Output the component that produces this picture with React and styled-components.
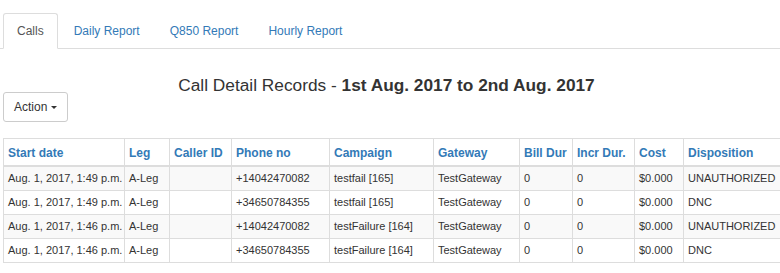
import React from "react";
import styled, { createGlobalStyle } from "styled-components";

const GlobalStyle = createGlobalStyle`
  body {
    margin: 0;
    background: #fff;
    font-family: "Liberation Sans", Arial, sans-serif;
    font-size: 12px;
    line-height: 17px;
    color: #333;
  }
`;

const tabs = ["Calls", "Daily Report", "Q850 Report", "Hourly Report"];

const columns = [
  { title: "Start date", width: 121 },
  { title: "Leg", width: 45 },
  { title: "Caller ID", width: 62 },
  { title: "Phone no", width: 98 },
  { title: "Campaign", width: 104 },
  { title: "Gateway", width: 86 },
  { title: "Bill Dur", width: 53 },
  { title: "Incr Dur.", width: 62 },
  { title: "Cost", width: 49 },
  { title: "Disposition", width: 97 },
];

const rows = [
  ["Aug. 1, 2017, 1:49 p.m.", "A-Leg", "", "+14042470082", "testfail [165]", "TestGateway", "0", "0", "$0.000", "UNAUTHORIZED"],
  ["Aug. 1, 2017, 1:49 p.m.", "A-Leg", "", "+34650784355", "testfail [165]", "TestGateway", "0", "0", "$0.000", "DNC"],
  ["Aug. 1, 2017, 1:46 p.m.", "A-Leg", "", "+14042470082", "testFailure [164]", "TestGateway", "0", "0", "$0.000", "UNAUTHORIZED"],
  ["Aug. 1, 2017, 1:46 p.m.", "A-Leg", "", "+34650784355", "testFailure [164]", "TestGateway", "0", "0", "$0.000", "DNC"],
];

function App() {
  return (
    <Page>
      <GlobalStyle />
      <TabBar>
        {tabs.map((t, i) => (
          <Tab key={t} $active={i === 0}>
            {t}
          </Tab>
        ))}
      </TabBar>
      <Title>
        Call Detail Records - <b>1st Aug. 2017 to 2nd Aug. 2017</b>
      </Title>
      <ActionButton>
        Action <Caret />
      </ActionButton>
      <Table>
        <colgroup>
          {columns.map((c) => (
            <col key={c.title} style={{ width: c.width }} />
          ))}
        </colgroup>
        <thead>
          <tr>
            {columns.map((c) => (
              <Th key={c.title}>
                <HeadLink>{c.title}</HeadLink>
              </Th>
            ))}
          </tr>
        </thead>
        <tbody>
          {rows.map((r, i) => (
            <Row key={i} $striped={i % 2 === 0}>
              {r.map((cell, j) => (
                <Td key={j}>{cell}</Td>
              ))}
            </Row>
          ))}
        </tbody>
      </Table>
    </Page>
  );
}

export default App;

const Page = styled.div`
  width: 780px;
  padding-top: 13px;
`;

const TabBar = styled.div`
  display: flex;
  padding-left: 3px;
  border-bottom: 1px solid #ddd;
`;

const Tab = styled.a`
  display: block;
  margin-right: 2px;
  margin-bottom: -1px;
  padding: 9px 13px 8px;
  line-height: 17px;
  border: 1px solid transparent;
  border-radius: 3px 3px 0 0;
  cursor: pointer;
  color: ${(p) => (p.$active ? "#555" : "#337ab7")};
  background: ${(p) => (p.$active ? "#fff" : "transparent")};
  border-color: ${(p) => (p.$active ? "#ddd #ddd transparent" : "transparent")};
`;

const Title = styled.h3`
  margin: 27px 0 -2px;
  padding-right: 7px;
  text-align: center;
  font-size: 17.3px;
  line-height: 18px;
  font-weight: normal;
  color: #333;
  b {
    font-weight: bold;
  }
`;

const ActionButton = styled.button`
  display: inline-flex;
  align-items: center;
  gap: 4px;
  margin: 0 0 0 3px;
  padding: 6px 10px 5px;
  height: 30px;
  font-family: inherit;
  font-size: 12px;
  line-height: 17px;
  color: #333;
  background: #fff;
  border: 1px solid #ccc;
  border-radius: 3px;
`;

const Caret = styled.span`
  display: inline-block;
  width: 0;
  height: 0;
  border-top: 3.5px solid #333;
  border-left: 3.5px solid transparent;
  border-right: 3.5px solid transparent;
`;

const Table = styled.table`
  margin: 16px 0 0 3px;
  width: 777px;
  table-layout: fixed;
  border-collapse: collapse;
  border: 1px solid #ddd;
`;

const Th = styled.th`
  padding: 6px 4px 3px;
  text-align: left;
  vertical-align: bottom;
  white-space: nowrap;
  border: 1px solid #ddd;
  border-bottom-width: 2px;
  font-size: 12px;
  line-height: 17px;
`;

const HeadLink = styled.a`
  color: #337ab7;
  font-weight: bold;
  cursor: pointer;
`;

const Row = styled.tr`
  background: ${(p) => (p.$striped ? "#f9f9f9" : "#fff")};
`;

const Td = styled.td`
  padding: 3px 4px;
  font-size: 11px;
  line-height: 17px;
  white-space: nowrap;
  overflow: hidden;
  border: 1px solid #ddd;
`;
